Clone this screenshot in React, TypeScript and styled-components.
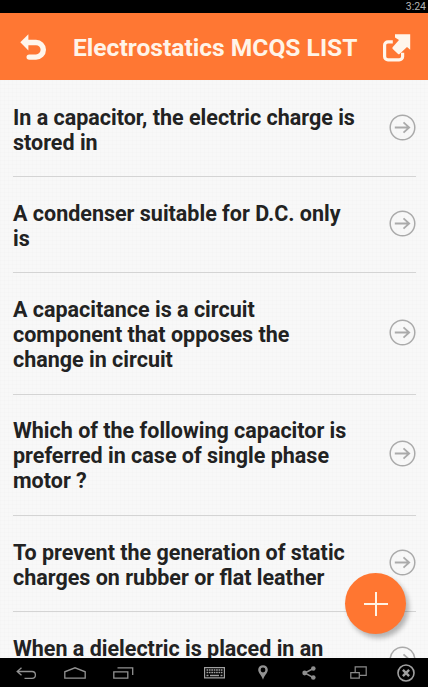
import React from 'react';
import styled, { createGlobalStyle } from 'styled-components';

const GlobalStyle = createGlobalStyle`
  body {
    margin: 0;
    font-family: Roboto, 'Liberation Sans', sans-serif;
  }
`;

const questions = [
  ['In a capacitor, the electric charge is', 'stored in'],
  ['A condenser suitable for D.C. only', 'is'],
  ['A capacitance is a circuit', 'component that opposes the', 'change in circuit'],
  ['Which of the following capacitor is', 'preferred in case of single phase', 'motor ?'],
  ['To prevent the generation of static', 'charges on rubber or flat leather'],
  ['When a dielectric is placed in an'],
];

const Screen = styled.div`
  display: flex;
  flex-direction: column;
  height: 687px;
  overflow: hidden;
  position: relative;
  width: 428px;
`;

const StatusBar = styled.div`
  background: #000;
  box-sizing: border-box;
  color: #b4b4b4;
  flex: none;
  font-size: 10.5px;
  height: 13px;
  line-height: 13px;
  padding-right: 2px;
  text-align: right;
`;

const Header = styled.header`
  align-items: center;
  background: #ff7733;
  box-sizing: border-box;
  display: flex;
  flex: none;
  height: 67px;
  padding: 0 17px 0 20px;
`;

const Title = styled.h1`
  color: #fff4e8;
  flex: 1;
  font-size: 24.6px;
  font-weight: 700;
  line-height: 30px;
  margin: 2px 0 0 26px;
  white-space: nowrap;
`;

const List = styled.ul`
  background-color: #f8f8f8;
  background-image:
    linear-gradient(90deg, rgba(0, 0, 0, 0.006) 1px, transparent 1px),
    linear-gradient(rgba(0, 0, 0, 0.006) 1px, transparent 1px);
  background-size: 4px 4px;
  flex: 1;
  list-style: none;
  margin: 0;
  min-height: 0;
  overflow: hidden;
  padding: 0.7px 12px 0 13px;
`;

const Row = styled.li`
  align-items: center;
  border-bottom: 1px solid #d4d4d4;
  box-sizing: border-box;
  display: flex;
  justify-content: space-between;
  min-height: 96.3px;
  padding: 23.9px 0 21.4px;
`;

const Question = styled.div`
  align-self: flex-start;
  color: #222;
  font-size: 21.5px;
  font-weight: 700;
  line-height: 25px;
  white-space: nowrap;
`;

const Line = styled.span`
  display: block;
`;

const AddButton = styled.button`
  align-items: center;
  background: #ff7631;
  border: 0;
  border-radius: 50%;
  bottom: 53px;
  box-shadow: 3px 4px 5px rgba(0, 0, 0, 0.28);
  display: flex;
  height: 61px;
  justify-content: center;
  padding: 0;
  position: absolute;
  right: 22px;
  width: 61px;
`;

const NavBar = styled.nav`
  align-items: center;
  background: #000;
  box-sizing: border-box;
  display: flex;
  flex: none;
  height: 29px;
  justify-content: space-between;
  padding: 0 13px 0 16px;
`;

const NavGroup = styled.div<{ $gap: number }>`
  align-items: center;
  display: flex;
  gap: ${({ $gap }) => $gap}px;
`;

const Icon = styled.svg`
  display: block;
  flex: none;
  overflow: visible;
`;

const RowIcon = styled(Icon)`
  margin-bottom: 4px;
`;

const CloseSvg = styled(Icon)`
  margin-left: -3.5px;
`;

const BackIcon = () => (
  <Icon width="27" height="28" viewBox="0 0 27 28" fill="none">
    <path d="M.3 9.3 8.4 1.2v16.2z" fill="#fff6ec" />
    <path
      d="M7 9.5h9a7.2 7.2 0 0 1 0 14.6H9.2"
      stroke="#fff6ec"
      strokeWidth="5.4"
      strokeLinecap="round"
    />
  </Icon>
);

const ExportIcon = () => (
  <Icon width="29" height="28" viewBox="0 0 29 28" fill="none">
    <path
      d="M10.8 8.8H6a3.4 3.4 0 0 0-3.4 3.4v11.2A3.4 3.4 0 0 0 6 26.8h11.2a3.4 3.4 0 0 0 3.4-3.4v-3.6"
      stroke="#fff6ec"
      strokeWidth="3.2"
    />
    <path
      d="M13 1.3h15.2v15.5L25 13.9l-7.2 6.8a1.4 1.4 0 0 1-2 0l-5-4.8a1.4 1.4 0 0 1 0-2L17 7.1l-4-2.6z"
      fill="#fff6ec"
    />
  </Icon>
);

const ArrowIcon = () => (
  <RowIcon width="27" height="27" viewBox="0 0 27 27" fill="none" stroke="#aaa" strokeWidth="1.5">
    <circle cx="13.5" cy="13.5" r="12.3" />
    <path d="M5.8 13.5h14.4M14.5 8.3l5.7 5.2-5.7 5.2" strokeWidth="1.8" />
  </RowIcon>
);

const PlusIcon = () => (
  <Icon width="24" height="24" viewBox="0 0 24 24" stroke="#fff3e5" strokeWidth="2">
    <path d="M12 0v24M0 12h24" />
  </Icon>
);

const NavBackIcon = () => (
  <Icon width="21" height="12" viewBox="0 0 21 12" fill="none" stroke="#929292" strokeWidth="1.3">
    <path d="M5.5.8 1.2 4.5l4.3 3.7M1.5 4.5H16a3.4 3.4 0 0 1 0 6.8H8.5" />
  </Icon>
);

const HomeIcon = () => (
  <Icon width="22" height="12" viewBox="0 0 22 12" fill="none" stroke="#929292" strokeWidth="1.3">
    <path d="M.8 11.2V4.8L11 .8l10.2 4v6.4z" />
  </Icon>
);

const RecentIcon = () => (
  <Icon width="21" height="12" viewBox="0 0 21 12" fill="none" stroke="#929292" strokeWidth="1.3">
    <path d="M.8 4.8h14v6.4H.8zM4.5.9h15.2v7.2" />
  </Icon>
);

const KeyboardIcon = () => (
  <Icon width="21" height="12" viewBox="0 0 21 12" fill="none" stroke="#a0a0a0">
    <path d="M.6.6h19.8v10.2H.6z" strokeWidth="1.2" />
    <path d="M2.5 3h16M2.5 5.5h16" strokeWidth="1.6" strokeDasharray="1.7 .7" />
    <path d="M2.5 8.4h2M6 8.4h9M16.5 8.4h2" strokeWidth="1.5" />
  </Icon>
);

const PinIcon = () => (
  <Icon width="10" height="15" viewBox="0 0 10 15">
    <path
      d="M5 .2C2.2.2.2 2.2.2 4.8.2 8 3.7 10.5 5 14.8 6.3 10.5 9.8 8 9.8 4.8 9.8 2.2 7.8.2 5 .2zm0 2.4a2.4 2.4 0 1 1 0 4.8 2.4 2.4 0 0 1 0-4.8z"
      fill="#929292"
      fillRule="evenodd"
    />
  </Icon>
);

const ShareIcon = () => (
  <Icon width="14" height="14" viewBox="0 0 14 14" fill="#8e8e8e">
    <path d="M11.3 2.5 2.8 7l8.5 4.6" fill="none" stroke="#8e8e8e" strokeWidth="1.5" />
    <circle cx="11.3" cy="2.5" r="2.3" />
    <circle cx="2.7" cy="7" r="2.4" />
    <circle cx="11.3" cy="11.5" r="2.3" />
  </Icon>
);

const WindowIcon = () => (
  <Icon width="17" height="13" viewBox="0 0 17 13" fill="none" stroke="#8a8a8a" strokeWidth="1.2">
    <path d="M5.2 6.5V.8h11v8.5H10M.8 6.7h8.5v5.5H.8z" />
  </Icon>
);

const CloseIcon = () => (
  <CloseSvg width="18" height="18" viewBox="0 0 18 18" fill="none" stroke="#a0a0a0">
    <circle cx="9" cy="9" r="8" strokeWidth="1.6" />
    <path d="m5.9 5.9 6.2 6.2m0-6.2-6.2 6.2" strokeWidth="2.4" />
  </CloseSvg>
);

const App = () => {
  return (
    <Screen>
      <GlobalStyle />
      <StatusBar>3:24</StatusBar>
      <Header>
        <BackIcon />
        <Title>Electrostatics MCQS LIST</Title>
        <ExportIcon />
      </Header>
      <List>
        {questions.map((lines) => (
          <Row key={lines[0]}>
            <Question>
              {lines.map((line) => (
                <Line key={line}>{line}</Line>
              ))}
            </Question>
            <ArrowIcon />
          </Row>
        ))}
      </List>
      <NavBar>
        <NavGroup $gap={27}>
          <NavBackIcon />
          <HomeIcon />
          <RecentIcon />
        </NavGroup>
        <NavGroup $gap={33.7}>
          <KeyboardIcon />
          <PinIcon />
          <ShareIcon />
          <WindowIcon />
          <CloseIcon />
        </NavGroup>
      </NavBar>
      <AddButton aria-label="Add">
        <PlusIcon />
      </AddButton>
    </Screen>
  );
};

export default App;
